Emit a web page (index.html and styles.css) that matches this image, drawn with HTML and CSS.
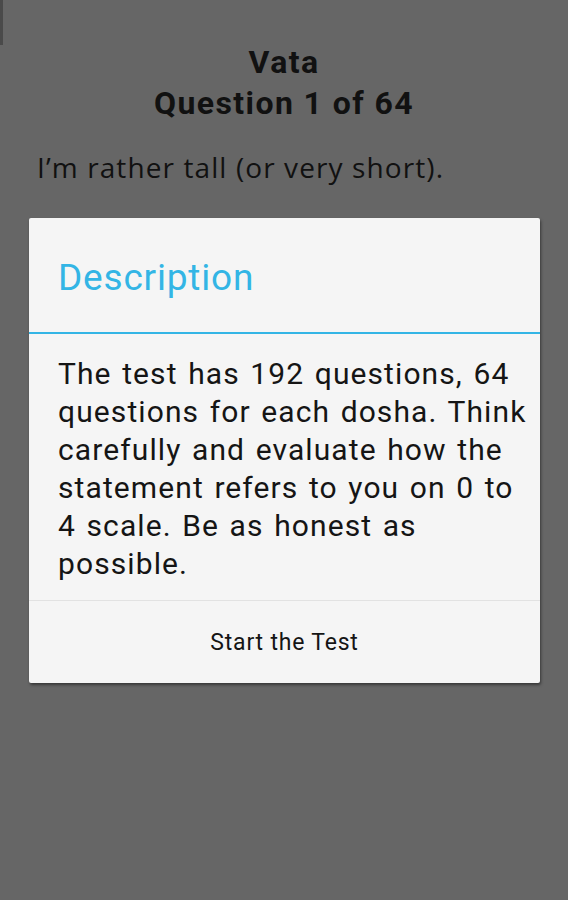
FILE: index.html
```html
<!DOCTYPE html>
<html>
<head>
    <title>Vata Test</title>
    <link rel="stylesheet" href="styles.css">
</head>
<body>
    <div class="edge"></div>
    <div class="header">
        <div class="dosha">Vata</div>
        <div class="counter">Question 1 of 64</div>
    </div>
    <p class="question">I’m rather tall (or very short).</p>

    <div class="dialog">
        <div class="dialog-title">Description</div>
        <div class="dialog-body">
            The test has 192 questions, 64 questions for each dosha. Think carefully and evaluate how the statement refers to you on 0 to 4 scale. Be as honest as possible.
        </div>
        <button class="dialog-button">Start the Test</button>
    </div>
</body>
</html>
```
FILE: styles.css
```css
body {
    margin: 0;
    background-color: #666666;
    font-family: Roboto, sans-serif;
    color: #111;
    min-height: 900px;
}

.edge {
    position: absolute;
    left: 0;
    top: 0;
    width: 3px;
    height: 45px;
    background-color: #4a4a4a;
}

.header {
    padding-top: 42px;
    text-align: center;
    font-weight: bold;
    font-size: 32px;
    letter-spacing: 1.4px;
    line-height: 41px;
}

.question {
    margin: 23px 0 0 37px;
    font-family: "Open Sans", sans-serif;
    font-size: 28px;
    letter-spacing: 1.1px;
    line-height: 40px;
    color: #111;
}

.dialog {
    margin: 31px 0 0 29px;
    width: 511px;
    background-color: #f5f5f5;
    border-radius: 2px;
    box-shadow: 1px 2px 3px rgba(0, 0, 0, 0.45);
}

.dialog-title {
    height: 116px;
    display: flex;
    align-items: center;
    padding-left: 29px;
    padding-top: 4px;
    box-sizing: border-box;
    font-size: 37px;
    letter-spacing: 0.8px;
    color: #33b5e5;
    border-bottom: 2px solid #33b5e5;
}

.dialog-body {
    padding: 21px 12px 17px 29px;
    font-size: 30px;
    letter-spacing: 1.1px;
    word-spacing: 2px;
    line-height: 38px;
    color: #151515;
    border-bottom: 1px solid #e2e2e2;
}

.dialog-button {
    display: block;
    width: 100%;
    height: 82px;
    border: none;
    background: none;
    font-family: Roboto, sans-serif;
    font-size: 23px;
    letter-spacing: 0.8px;
    color: #151515;
    padding: 0;
}
```
